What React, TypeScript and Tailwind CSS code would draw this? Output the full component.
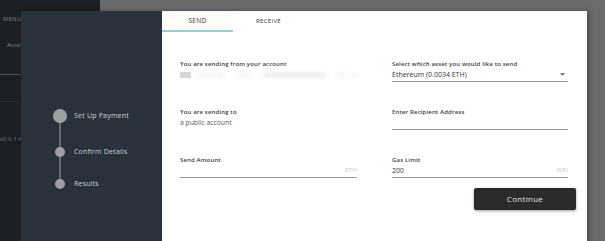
const font = { fontFamily: '"Open Sans", "DejaVu Sans", sans-serif' }

type Step = { label: string; big?: boolean; gap: string }

const steps: Step[] = [
  { label: 'Set Up Payment', big: true, gap: 'mt-0' },
  { label: 'Confirm Details', gap: 'mt-[24px]' },
  { label: 'Results', gap: 'mt-[21px]' },
]

function Field({
  label,
  value,
  suffix,
  underline = true,
  select,
  muted,
}: {
  label: string
  value?: string
  suffix?: string
  underline?: boolean
  select?: boolean
  muted?: boolean
}) {
  return (
    <div className="flex flex-col h-[22px]">
      <div className="h-[8px] leading-[8px] text-[6px] font-semibold text-[#404040] tracking-[0.15px]">{label}</div>
      <div
        className={`h-[14px] flex items-center justify-between ${underline ? 'border-b border-[#9a9a9a]' : ''}`}
      >
        <span className={`leading-none ${muted ? 'text-[6.8px] text-[#585858]' : 'text-[7px] text-[#333]'}`}>
          {value}
        </span>
        {suffix && <span className="text-[6px] text-[#c6c6c6] tracking-[0.3px]">{suffix}</span>}
        {select && (
          <svg className="w-[5px] h-[3px] mr-[3px]" viewBox="0 0 10 6">
            <path d="M0 0h10L5 6z" fill="#777" />
          </svg>
        )}
      </div>
    </div>
  )
}

export default function App() {
  return (
    <div className="relative w-[605px] h-[241px] overflow-hidden bg-[#6c6c6c]" style={font}>
      {/* dimmed app sidebar behind the modal */}
      <div className="absolute left-0 top-0 w-[100px] h-full bg-[#1b2027] flex flex-col">
        <div className="pt-[15px] pl-[3px] text-[5.5px] tracking-[0.6px] text-[#7d848c]">MENU</div>
        <div className="pt-[18px] pl-[7px] text-[6px] text-[#8a9099]">Account</div>
        <div className="mt-[24px] h-px bg-[#4d535b]" />
        <div className="mt-[26px] h-px bg-[#252a31]" />
        <div className="mt-[33px] text-[5.5px] text-[#7d848c] tracking-[0.3px]">v0.0.1-h</div>
      </div>

      {/* modal */}
      <div className="absolute left-[21px] top-[11px] w-[566px] h-[240px] flex shadow-[2px_0_5px_rgba(0,0,0,0.35)]">
        {/* steps */}
        <div className="w-[141px] bg-[#29313a] pt-[98px] pl-[32px]">
          <div className="relative flex flex-col">
            <div className="absolute left-[6px] top-[7px] w-[2px] h-[67px] bg-[#656b72]" />
            {steps.map(s => (
              <div key={s.label} className={`relative flex items-center ${s.gap}`}>
                <div className="w-[14px] flex justify-center">
                  <div
                    className={`rounded-full bg-[#9d9fa2] ${s.big ? 'w-[14px] h-[14px]' : 'w-[10px] h-[10px]'}`}
                  />
                </div>
                <span className="ml-[7px] text-[7px] text-[#cfd3d7] tracking-[0.2px]">{s.label}</span>
              </div>
            ))}
          </div>
        </div>

        {/* form */}
        <div className="flex-1 bg-white flex flex-col">
          <div className="flex h-[21px]">
            <div className="w-[71px] flex items-center justify-center bg-[#fcfbf7] border-b-2 border-[#8fd3d3] text-[6.5px] text-[#333] tracking-[0.3px]">
              SEND
            </div>
            <div className="w-[71px] flex items-center justify-center text-[6px] text-[#333] tracking-[0.3px]">
              RECEIVE
            </div>
          </div>

          <div className="pt-[28px] pl-[18px] pr-[19px] grid grid-cols-[177px_176px] gap-x-[35px] gap-y-[26px]">
            <div className="flex flex-col h-[22px]">
              <div className="h-[8px] leading-[8px] text-[6px] font-semibold text-[#404040] tracking-[0.15px]">
                You are sending from your account
              </div>
              <div className="h-[14px] flex items-center gap-[6px]">
                <div className="w-[12px] h-[6px] bg-[#d6d6d6]" />
                <div className="flex items-center gap-[10px] blur-[2px]">
                  <div className="w-[28px] h-[3px] bg-[#ededed]" />
                  <div className="w-[18px] h-[3px] bg-[#efefef]" />
                  <div className="w-[62px] h-[4px] bg-[#e6e6e6]" />
                  <div className="w-[22px] h-[3px] bg-[#f2f2f2]" />
                </div>
              </div>
            </div>
            <Field label="Select which asset you would like to send" value="Ethereum (0.0034 ETH)" select />
            <Field label="You are sending to" value="a public account" underline={false} muted />
            <Field label="Enter Recipient Address" />
            <Field label="Send Amount" suffix="ETH" />
            <Field label="Gas Limit" value="200" suffix="WEI" />
          </div>

          <div className="flex justify-end pr-[11px] mt-[10px]">
            <button className="w-[102px] h-[22px] rounded-[2px] bg-[#2a2a2a] shadow-[0_1px_3px_rgba(0,0,0,0.4)] text-[8px] text-[#e6e6e6] tracking-[0.3px]">
              Continue
            </button>
          </div>
        </div>
      </div>
    </div>
  )
}
